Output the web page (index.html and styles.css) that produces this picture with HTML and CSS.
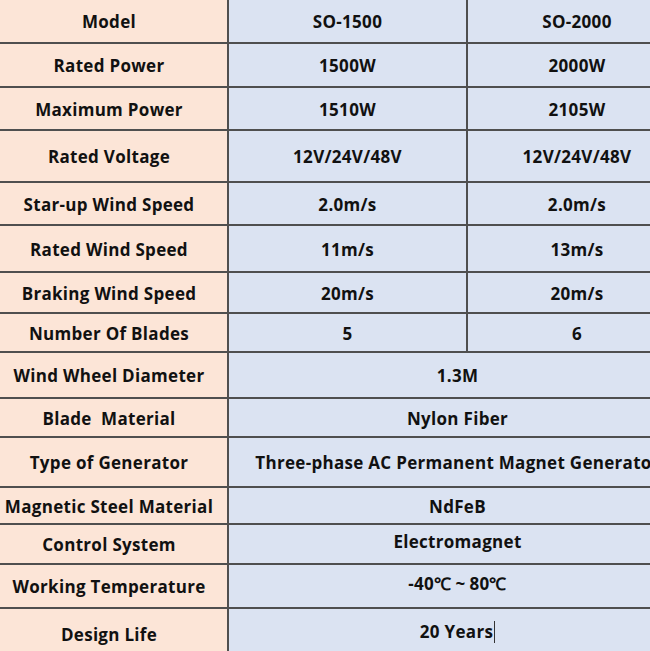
FILE: index.html
```html
<!DOCTYPE html>
<html>
<head>
<meta charset="utf-8">
<link rel="stylesheet" href="styles.css">
</head>
<body>
<div class="spec">
  <div class="c k r0">Model</div><div class="c v">SO-1500</div><div class="c v">SO-2000</div>
  <div class="c k">Rated Power</div><div class="c v">1500W</div><div class="c v">2000W</div>
  <div class="c k">Maximum Power</div><div class="c v">1510W</div><div class="c v">2105W</div>
  <div class="c k">Rated Voltage</div><div class="c v">12V/24V/48V</div><div class="c v">12V/24V/48V</div>
  <div class="c k">Star-up Wind Speed</div><div class="c v">2.0m/s</div><div class="c v">2.0m/s</div>
  <div class="c k">Rated Wind Speed</div><div class="c v">11m/s</div><div class="c v">13m/s</div>
  <div class="c k">Braking Wind Speed</div><div class="c v">20m/s</div><div class="c v">20m/s</div>
  <div class="c k">Number Of Blades</div><div class="c v">5</div><div class="c v">6</div>
  <div class="c k">Wind Wheel Diameter</div><div class="c v span">1.3M</div>
  <div class="c k pre">Blade  Material</div><div class="c v span">Nylon Fiber</div>
  <div class="c k">Type of Generator</div><div class="c v span">Three-phase AC Permanent Magnet Generator</div>
  <div class="c k">Magnetic Steel Material</div><div class="c v span">NdFeB</div>
  <div class="c k">Control System</div><div class="c v span up">Electromagnet</div>
  <div class="c k">Working Temperature</div><div class="c v span up">-40℃<span class="tilde">~</span>80℃</div>
  <div class="c k">Design Life</div><div class="c v span up">20 Years<span class="caret"></span></div>
</div>
</body>
</html>
```

FILE: styles.css
```css
html, body {
  margin: 0;
  padding: 0;
  overflow: hidden;
  background: #ffffff;
}

.spec {
  width: 686px;
  display: grid;
  grid-template-columns: 227px 237px 218px;
  grid-template-rows: 42px 42px 41px 50px 41px 45px 39px 37px 44px 37px 48px 35px 38px 42px 50px;
  gap: 2px;
  background: #4f4f4f;
  font-family: "Open Sans", "Liberation Sans", sans-serif;
  font-weight: 700;
  font-size: 17px;
  letter-spacing: 0.3px;
  color: #111111;
}

.c {
  display: flex;
  align-items: center;
  justify-content: center;
  white-space: nowrap;
  overflow: hidden;
  padding-top: 1px;
}

.k {
  background: #fce5d7;
  padding-right: 9px;
}

.v {
  background: #dbe3f2;
}

.span {
  grid-column: 2 / 4;
}

.pre {
  white-space: pre;
}

.up {
  padding-top: 0;
  padding-bottom: 5px;
}

.tilde {
  margin: 0 4px;
}

.caret {
  display: inline-block;
  width: 1px;
  height: 22px;
  background: #333;
  margin-left: 1px;
}
```
